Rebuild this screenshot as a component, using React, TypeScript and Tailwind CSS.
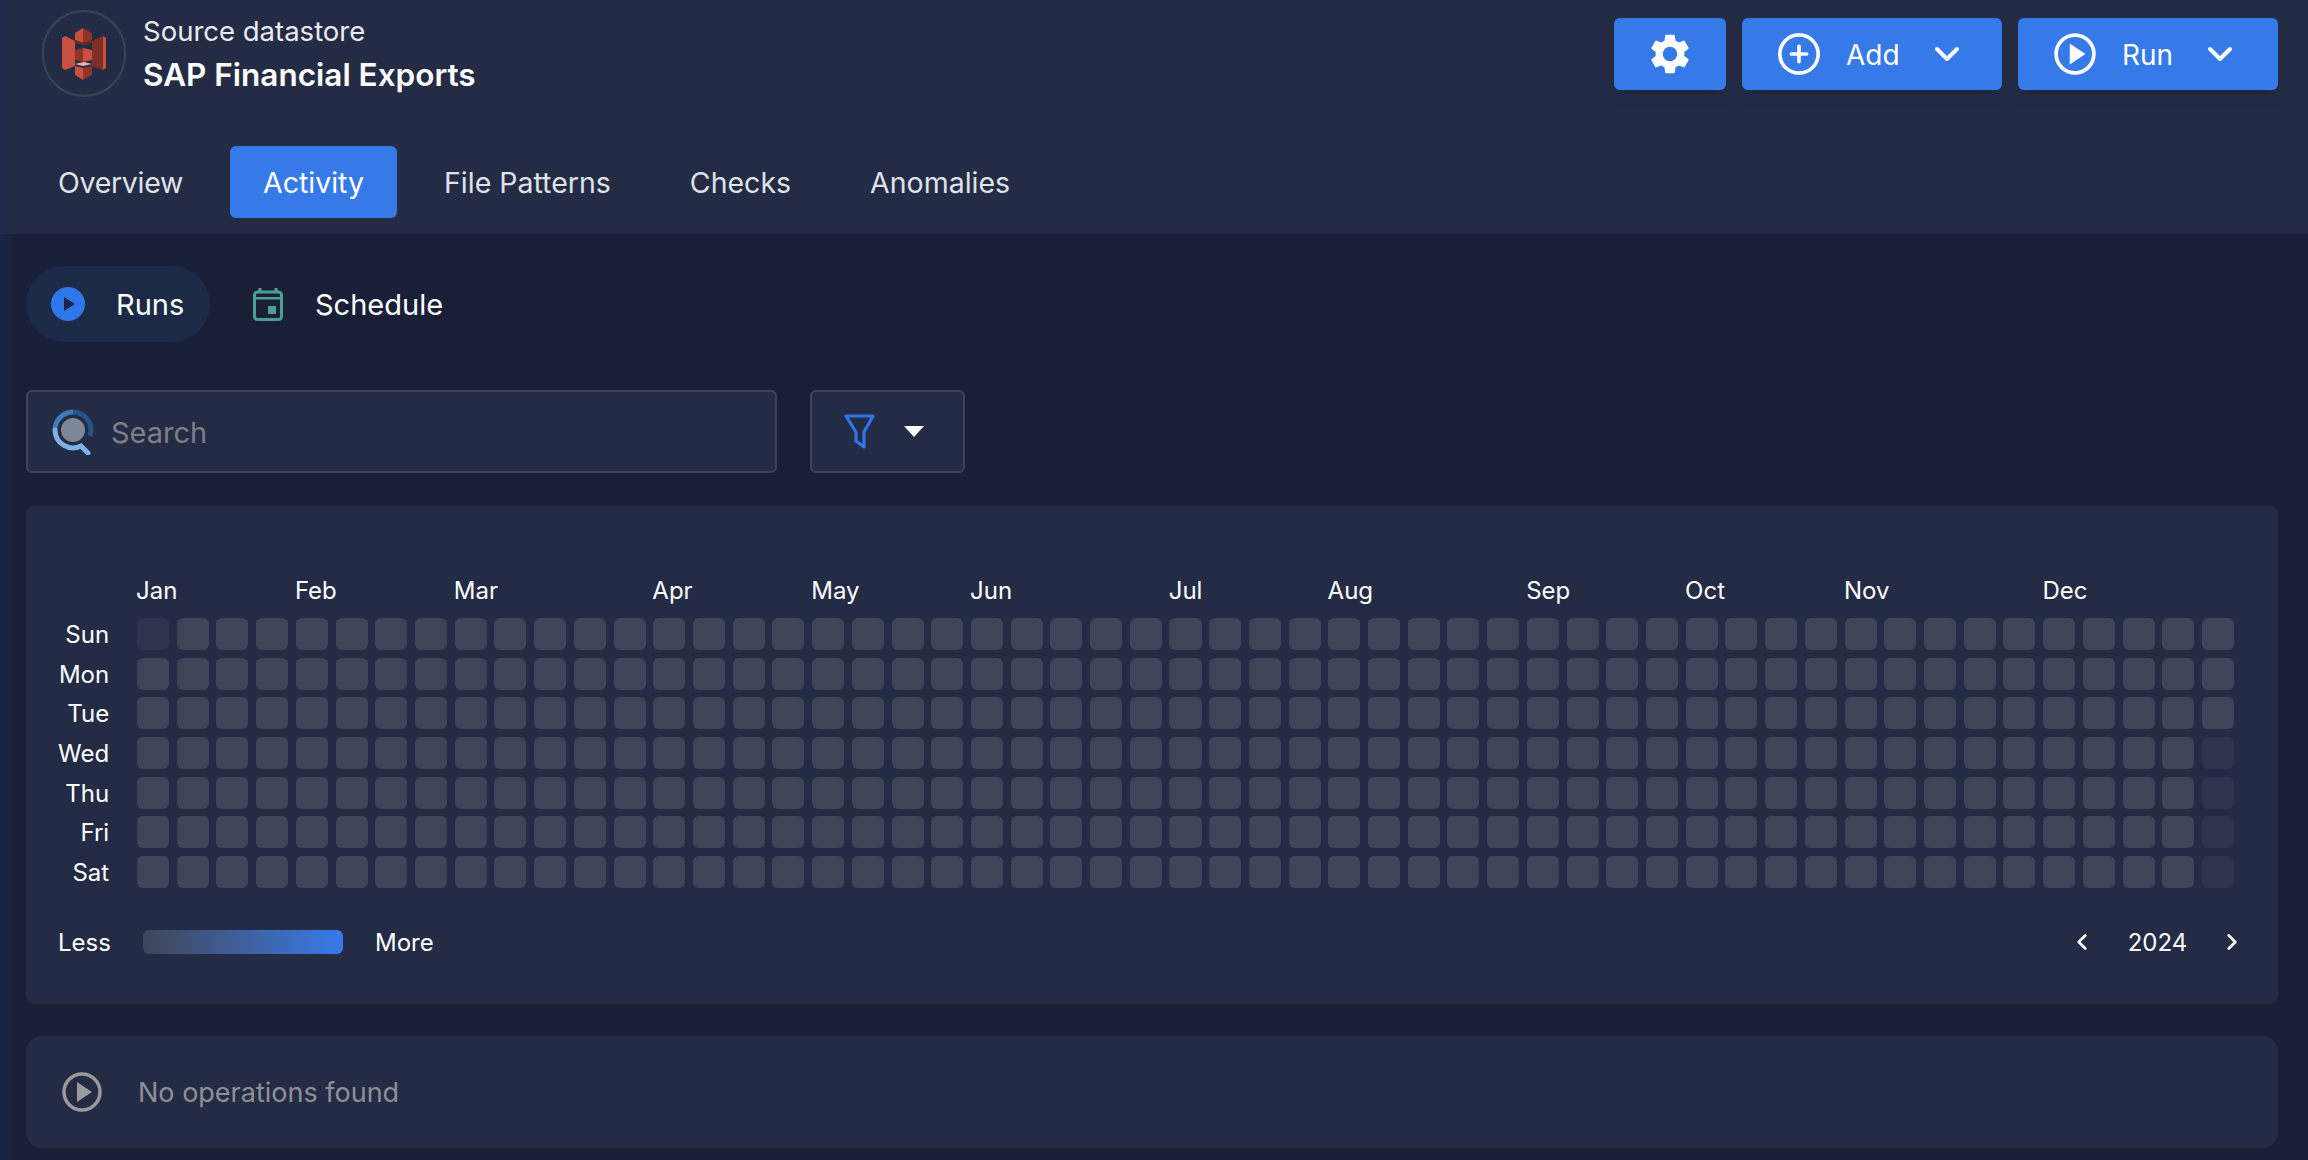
import { ChevronDown, ChevronLeft, ChevronRight, CirclePlus } from 'lucide-react'
import { MdSettings } from 'react-icons/md'

const font = { fontFamily: 'Inter, "Noto Sans", sans-serif' }

const tabs = ['Overview', 'Activity', 'File Patterns', 'Checks', 'Anomalies']
const days = ['Sun', 'Mon', 'Tue', 'Wed', 'Thu', 'Fri', 'Sat']
const months = [
  { name: 'Jan', col: 0 },
  { name: 'Feb', col: 4 },
  { name: 'Mar', col: 8 },
  { name: 'Apr', col: 13 },
  { name: 'May', col: 17 },
  { name: 'Jun', col: 21 },
  { name: 'Jul', col: 26 },
  { name: 'Aug', col: 30 },
  { name: 'Sep', col: 35 },
  { name: 'Oct', col: 39 },
  { name: 'Nov', col: 43 },
  { name: 'Dec', col: 48 },
]

const S3Logo = () => (
  <svg viewBox="0 0 44 52" className="h-[52px] w-[44px]">
    <path d="M0 10l3-2 10 5v25L3 42l-3-2z" fill="#c9503f" />
    <path d="M44 10l-3-2-11 5v25l11 4 3-2z" fill="#7f2f24" />
    <path d="M41 8l3 2v30l-3 2z" fill="#c9503f" />
    <path d="M13 5l8-5v15l-8-3z" fill="#c9503f" />
    <path d="M30 5l-9-5v15l9-3z" fill="#8f3428" />
    <path d="M13 12l8 3 9-3v3l-9 2-8-2z" fill="#6f281e" />
    <path d="M13 22l8-2v14l-8-2z" fill="#8f3428" />
    <path d="M30 22l-9-2v14l9-2z" fill="#c9503f" />
    <path d="M13 36l9-2 8 2-9 2z" fill="#e8b4ab" />
    <path d="M13 38l8 2v12l-8-5z" fill="#c9503f" />
    <path d="M30 38l-9 2v12l9-5z" fill="#8f3428" />
  </svg>
)

const SearchLogo = () => (
  <svg viewBox="0 0 44 46" className="h-[46px] w-[44px]">
    <circle cx="21" cy="21" r="12" fill="#7c8798" />
    <path d="M21 3a18 18 0 0 1 17 24" fill="none" stroke="#25558a" strokeWidth="5" />
    <path d="M21 3A18 18 0 0 0 3 21" fill="none" stroke="#3f7bbb" strokeWidth="5" />
    <path d="M3 21a18 18 0 0 0 26 16l7 7" fill="none" stroke="#7db1e8" strokeWidth="5" strokeLinecap="round" />
  </svg>
)

const PlayOutline = ({ color, size }: { color: string; size: number }) => (
  <svg viewBox="0 0 40 40" width={size} height={size}>
    <circle cx="20" cy="20" r="18" fill="none" stroke={color} strokeWidth="3.5" />
    <path d="M15 10l15 10-15 10z" fill={color} />
  </svg>
)

export default function App() {
  return (
    <div className="relative h-[1160px] w-[2308px] overflow-hidden bg-[#1a1f38] text-white" style={font}>
      <div className="absolute inset-y-0 left-0 w-[14px] bg-gradient-to-r from-[#1a2a4c] to-transparent opacity-50" />
      <header className="h-[234px] bg-[#242c45] pl-[42px] pr-[30px]">
        <div className="flex h-[108px] justify-between pt-[10px]">
          <div className="flex gap-[17px]">
            <div className="flex h-[87px] w-[84px] items-center justify-center rounded-full border-2 border-[#3d4458]">
              <S3Logo />
            </div>
            <div>
              <div className="mt-[5px] text-[27.5px] leading-[32px] text-[#e9ebf0]">Source datastore</div>
              <div className="mt-[9px] text-[31.5px] leading-[38px] font-semibold">SAP Financial Exports</div>
            </div>
          </div>
          <div className="flex gap-4 pt-2">
            <button className="flex h-[72px] w-[112px] items-center justify-center rounded-md bg-[#367ae9] shadow-lg">
              <MdSettings size={48} />
            </button>
            <button className="flex h-[72px] w-[260px] items-center rounded-md bg-[#367ae9] pl-[36px] text-[28px] shadow-lg">
              <CirclePlus size={46} strokeWidth={1.9} className="ml-[-2px]" />
              <span className="ml-[24px] pt-[2px]">Add</span>
              <ChevronDown size={40} strokeWidth={2.4} className="ml-[27px]" />
            </button>
            <button className="flex h-[72px] w-[260px] items-center rounded-md bg-[#367ae9] pl-[36px] text-[28px] shadow-lg">
              <PlayOutline color="white" size={42} />
              <span className="ml-[26px] pt-[2px]">Run</span>
              <ChevronDown size={40} strokeWidth={2.4} className="ml-[27px]" />
            </button>
          </div>
        </div>
        <nav className="ml-[-16px] mt-[38px] flex items-center gap-[15px]">
          {tabs.map(tab => (
            <div
              key={tab}
              className={tab === 'Activity'
                ? 'flex h-[72px] items-center rounded-md bg-[#367ae9] px-[33px] pt-[2px] text-[28.5px] text-white'
                : tab === 'Overview'
                  ? 'flex h-[72px] items-center px-[32px] pt-[2px] text-[28.5px] tracking-[-0.3px] text-[#dfe2e9]'
                  : 'flex h-[72px] items-center px-[32px] pt-[2px] text-[28.5px] text-[#dfe2e9]'}
            >
              {tab}
            </div>
          ))}
        </nav>
      </header>

      <main className="pl-[26px] pr-[30px]">
        <div className="flex items-center pt-[32px]">
          <div className="flex h-[76px] w-[184px] items-center gap-[31px] rounded-full bg-[#1d2a47] pl-[25px] text-[29px]">
            <svg viewBox="0 0 34 34" className="h-[34px] w-[34px]">
              <circle cx="17" cy="17" r="17" fill="#2f76ea" />
              <path d="M13 10l11 7-11 7z" fill="#1a2444" />
            </svg>
            <span className="pt-[2px]">Runs</span>
          </div>
          <div className="flex items-center gap-[32px] pl-[43px] text-[29px]">
            <svg viewBox="0 0 30 33" className="h-[33px] w-[30px]">
              <path d="M7 0v5M23 0v5" stroke="#4a9e94" strokeWidth="3" />
              <rect x="1.5" y="4" width="27" height="27.5" rx="3" fill="none" stroke="#4a9e94" strokeWidth="3" />
              <rect x="1.5" y="9" width="27" height="2.5" fill="#4a9e94" />
              <rect x="15" y="18" width="8" height="8" fill="#4a9e94" />
            </svg>
            <span className="pt-[2px]">Schedule</span>
          </div>
        </div>

        <div className="mt-[48px] flex gap-[33px]">
          <div className="flex h-[83px] w-[751px] items-center gap-[15px] rounded-md border-2 border-[#3d4458] bg-[#242b45] pl-[24px] text-[29px] text-[#7d7f88]">
            <SearchLogo />
            <span className="pt-[2px]">Search</span>
          </div>
          <div className="flex h-[83px] w-[155px] items-center rounded-md border-2 border-[#3d4458] bg-[#242b45] pl-[32px]">
            <svg viewBox="0 0 31 35" className="h-[35px] w-[31px]" fill="none" stroke="#2f76ea" strokeWidth="3.2" strokeLinejoin="round">
              <path d="M2 2h27L20 18v15l-8-6v-9z" />
            </svg>
            <svg viewBox="0 0 20 11" className="ml-[29px] h-[11px] w-[20px]">
              <path d="M0 0h20L10 11z" fill="white" />
            </svg>
          </div>
        </div>

        <section className="mt-[33px] h-[498px] rounded-lg bg-[#242b45] pl-[32px] pt-[68px]">
          <div className="flex text-[24px]">
            <div className="w-[79px] shrink-0" />
            <div className="relative h-[32px] w-[2097px]">
              {months.map(m => (
                <span key={m.name} className="absolute top-[1px] leading-[32px]" style={{ left: m.col * 39.72 - 1 }}>{m.name}</span>
              ))}
            </div>
          </div>
          <div className="mt-[12px] flex text-[24px]">
            <div className="grid w-[49px] shrink-0 auto-rows-[32px] gap-y-[7.67px] text-right leading-[34px]">
              {days.map(d => <div key={d}>{d}</div>)}
            </div>
            <div className="ml-[30px] grid w-[2097px] auto-rows-[32px] grid-cols-[repeat(53,1fr)] gap-x-[7.7px] gap-y-[7.67px]">
              {Array.from({ length: 53 * 7 }).map((_, i) => {
                const col = i % 53
                const row = Math.floor(i / 53)
                const faded = (col === 0 && row === 0) || (col === 52 && row >= 3)
                return <div key={i} className={faded ? 'rounded-md bg-[#2d344c]' : 'rounded-md bg-[#3f4558]'} />
              })}
            </div>
          </div>
          <div className="mt-[36px] flex h-[36px] items-center text-[24px]">
            <span className="w-[85px] pt-[2px]">Less</span>
            <div className="h-[24px] w-[200px] rounded-md bg-gradient-to-r from-[#3f4558] to-[#367ae9]" />
            <span className="ml-[32px] pt-[2px]">More</span>
            <div className="ml-[1635px] flex items-center">
              <ChevronLeft size={26} strokeWidth={2.5} />
              <span className="ml-[33px] pt-[2px]">2024</span>
              <ChevronRight size={26} strokeWidth={2.5} className="ml-[32px]" />
            </div>
          </div>
        </section>

        <section className="mt-[32px] flex h-[112px] items-center gap-[36px] rounded-2xl bg-[#242b45] pl-[36px] text-[27px] text-[#8f9097]">
          <PlayOutline color="#9a9a9a" size={40} />
          <span className="pt-[2px]">No operations found</span>
        </section>
      </main>
    </div>
  )
}
